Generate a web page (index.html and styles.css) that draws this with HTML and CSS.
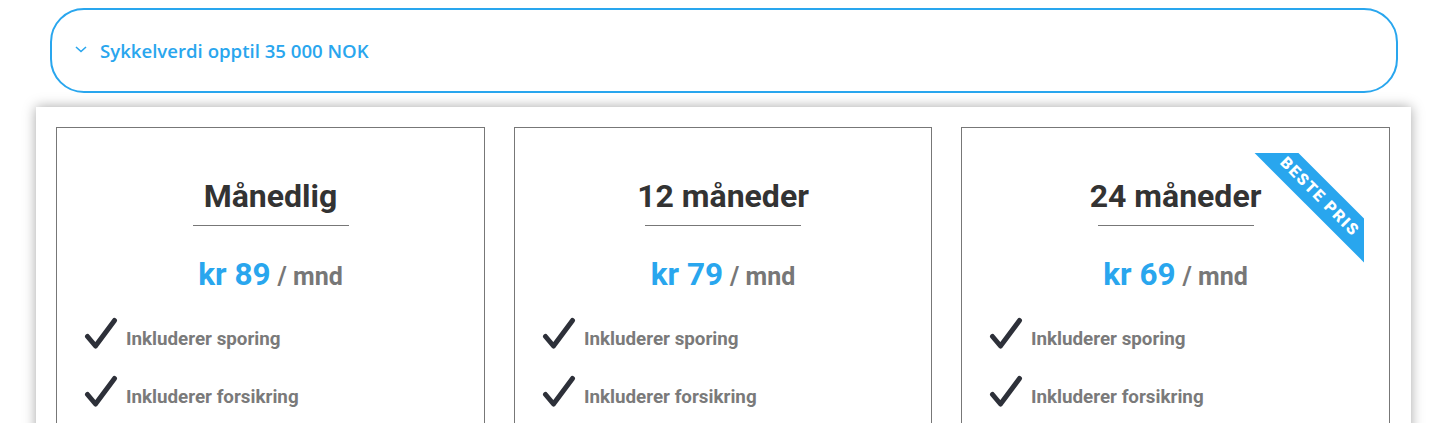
FILE: index.html
```html
<!DOCTYPE html>
<html lang="no">
<head>
  <meta charset="UTF-8">
  <meta name="viewport" content="width=device-width, initial-scale=1.0">
  <title>Abonnement</title>
  <link rel="stylesheet" href="styles.css">
</head>
<body>
  <div class="accordion">
    <svg class="chevron" width="12" height="7" viewBox="0 0 12 7"><path d="M1 1 L6 5.5 L11 1" fill="none" stroke="#29a6ee" stroke-width="1.6"/></svg>
    <span class="accordion-title">Sykkelverdi opptil 35 000 NOK</span>
  </div>
  <div class="panel">
    <div class="plans">
      <div class="plan">
        <h2>Månedlig</h2>
        <div class="price"><span class="amount">kr 89</span> <span class="unit">/ mnd</span></div>
        <ul class="features">
          <li><svg class="check" width="34" height="32" viewBox="0 0 34 32"><path d="M3.5 19.5 L11.5 29 L30.5 3.5" fill="none" stroke="#2d3039" stroke-width="5" stroke-linecap="round" stroke-linejoin="round"/></svg>Inkluderer sporing</li>
          <li><svg class="check" width="34" height="32" viewBox="0 0 34 32"><path d="M3.5 19.5 L11.5 29 L30.5 3.5" fill="none" stroke="#2d3039" stroke-width="5" stroke-linecap="round" stroke-linejoin="round"/></svg>Inkluderer forsikring</li>
        </ul>
      </div>
      <div class="plan">
        <h2>12 måneder</h2>
        <div class="price"><span class="amount">kr 79</span> <span class="unit">/ mnd</span></div>
        <ul class="features">
          <li><svg class="check" width="34" height="32" viewBox="0 0 34 32"><path d="M3.5 19.5 L11.5 29 L30.5 3.5" fill="none" stroke="#2d3039" stroke-width="5" stroke-linecap="round" stroke-linejoin="round"/></svg>Inkluderer sporing</li>
          <li><svg class="check" width="34" height="32" viewBox="0 0 34 32"><path d="M3.5 19.5 L11.5 29 L30.5 3.5" fill="none" stroke="#2d3039" stroke-width="5" stroke-linecap="round" stroke-linejoin="round"/></svg>Inkluderer forsikring</li>
        </ul>
      </div>
      <div class="plan">
        <div class="ribbon"><span>BESTE PRIS</span></div>
        <h2>24 måneder</h2>
        <div class="price"><span class="amount">kr 69</span> <span class="unit">/ mnd</span></div>
        <ul class="features">
          <li><svg class="check" width="34" height="32" viewBox="0 0 34 32"><path d="M3.5 19.5 L11.5 29 L30.5 3.5" fill="none" stroke="#2d3039" stroke-width="5" stroke-linecap="round" stroke-linejoin="round"/></svg>Inkluderer sporing</li>
          <li><svg class="check" width="34" height="32" viewBox="0 0 34 32"><path d="M3.5 19.5 L11.5 29 L30.5 3.5" fill="none" stroke="#2d3039" stroke-width="5" stroke-linecap="round" stroke-linejoin="round"/></svg>Inkluderer forsikring</li>
        </ul>
      </div>
    </div>
  </div>
</body>
</html>
```

FILE: styles.css
```css
body { margin: 0; padding: 0; background: #fff; font-family: Roboto, "Liberation Sans", sans-serif; }

.accordion { display: flex; align-items: center; height: 81px; margin: 8px 46px 0 50px; border: 2px solid #29a6ee; border-radius: 34px; padding-left: 23px; }
.chevron { display: block; margin-right: 13px; margin-top: -3px; }
.accordion-title { font-family: "Open Sans", sans-serif; font-weight: 600; font-size: 18.6px; color: #29a6ee; }

.panel { margin: 14px 33px 0 36px; padding: 20px 20px 40px; background: #fff; box-shadow: 0 0 12px rgba(0, 0, 0, 0.35); }
.plans { display: grid; grid-template-columns: 429px 418px 429px; column-gap: 29px; }
.plan { position: relative; border: 1px solid #777; padding: 49px 0 20px; text-align: center; }

.plan h2 { margin: 0; font-size: 32px; line-height: 38px; font-weight: 700; color: #333; padding-bottom: 10px; }
.plan h2::after { content: ""; display: block; width: 156px; height: 1px; margin: 10px auto 0; background: #777; }

.price { margin-top: 20px; line-height: 38px; font-weight: 700; }
.amount { font-size: 31.5px; color: #29a6ee; margin-right: 3px; }
.unit { font-size: 25px; color: #777; }

.features { list-style: none; margin: 11px 0 0; padding: 0 0 0 27px; text-align: left; }
.features li { display: flex; align-items: center; height: 58px; font-size: 18.8px; font-weight: 700; color: #7a7a7a; }
.check { display: block; margin: -12px 8px 0 0; flex: none; }

.ribbon { position: absolute; top: 25px; right: 25px; width: 110px; height: 110px; overflow: hidden; }
.ribbon span { position: absolute; left: -19px; top: 28px; width: 170px; height: 31px; line-height: 31px; background: #29a6ee; color: #fff; font-size: 16px; font-weight: 900; letter-spacing: 1.6px; text-align: center; transform: rotate(45deg); }
```
